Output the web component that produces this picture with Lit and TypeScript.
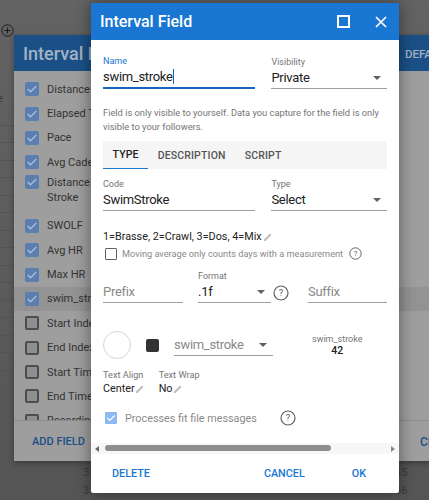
import { LitElement, html, css, svg } from "lit";
import { customElement } from "lit/decorators.js";

const caret = html`<svg class="caret" width="8" height="4" viewBox="0 0 8 4"><path d="M0 0h8L4 4z" fill="currentColor"/></svg>`;
const pencil = html`<svg class="pencil" width="8" height="8" viewBox="0 0 9 9"><path d="M0 9V7.4L6.8.6l1.6 1.6L1.6 9z" fill="#bdbdbd"/></svg>`;
const help = (s: number) => html`<svg class="help" width=${s} height=${s} viewBox="0 0 24 24"><circle cx="12" cy="12" r="10.5" fill="none" stroke="#5f5f5f" stroke-width="1.8"/><text x="12" y="17" text-anchor="middle" font-size="14" font-family="Roboto" fill="#5f5f5f">?</text></svg>`;
const check = svg`<path d="M3.5 9l3.6 3.6 7.4-7.4" fill="none" stroke-width="1.8"/>`;

@customElement("app-root")
export class AppRoot extends LitElement {
  static styles = css`
    :host { display: block; width: 429px; height: 500px; overflow: hidden; position: relative; background: linear-gradient(#636363, #555); font-family: Roboto, "Liberation Sans", sans-serif; }
    .plus { position: absolute; left: 1px; top: 24px; }
    .bgrows { position: absolute; left: 0; right: 0; top: 108px; }
    .bgrow { height: 17.5px; border-bottom: 1px solid #545454; box-sizing: border-box; }
    .bgnum { position: absolute; font-size: 11px; color: #3a3a3a; }
    .back { position: absolute; left: 14px; top: 35px; width: 440px; height: 426px; background: #9e9e9e; box-shadow: 0 2px 6px rgba(0,0,0,.35); display: flex; flex-direction: column; }
    .back-head { height: 36px; background: #1b5087; color: #a3b3c4; font-size: 18px; font-weight: 500; display: flex; align-items: center; padding-left: 9px; flex: none; }
    .back-list { flex: 1; padding: 0 0 0 11px; overflow: hidden; font-size: 11px; color: #333; }
    .b-item { display: flex; align-items: center; gap: 8px; height: 24.4px; }
    .b-item.two { align-items: flex-start; height: 39px; line-height: 15px; }
    .b-item.sel { background: #939393; margin-left: -11px; padding-left: 11px; }
    .b-box { width: 14px; height: 14px; border-radius: 2px; flex: none; background: #5a7eae; box-sizing: border-box; }
    .b-box svg { display: block; stroke: #a9bdd8; }
    .b-box.off { background: #8f8f8f; border: 2px solid #4e4e4e; }
    .back-foot { height: 40px; flex: none; border-top: 1px solid #8c8c8c; display: flex; align-items: center; padding-left: 18px; color: #1b5087; font-size: 11px; font-weight: 500; }
    .defa { position: absolute; left: 405px; top: 47px; color: #a3b3c4; font-size: 11.5px; font-weight: 500; }
    .cl { position: absolute; left: 420px; top: 435px; color: #1b5087; font-size: 12px; font-weight: 500; }

    .dlg { position: absolute; left: 91px; top: 3px; width: 308px; height: 490px; background: #fff; box-shadow: 0 0 16px rgba(0,0,0,.45); display: flex; flex-direction: column; border-radius: 2px; }
    .head { height: 37px; background: #1976d2; color: #fff; font-size: 16px; font-weight: 500; display: flex; align-items: center; padding: 0 12px 0 9px; flex: none; }
    .head .t { flex: 1; }
    .head .icons { display: flex; gap: 25px; align-items: center; }
    .body { flex: 1; padding: 0 12px; color: #212121; min-height: 0; }
    .row { display: flex; align-items: flex-end; }
    .field { position: relative; border-bottom: 1px solid #9e9e9e; display: flex; flex-direction: column; box-sizing: border-box; }
    .field.focus { border-bottom: 2px solid #1565c0; }
    .lbl { font-size: 9px; line-height: 12px; color: #757575; }
    .lbl.blue { color: #1976d2; }
    .val { font-size: 13px; letter-spacing: -.3px; line-height: 20px; color: #212121; display: flex; align-items: center; justify-content: space-between; }
    .val.ph { color: #8a8a8a; }
    .cur { display: inline-block; width: 1px; height: 15px; background: #1565c0; vertical-align: -3px; }
    .caret { color: #616161; margin-right: 6px; flex: none; }
    .name-row { margin-top: 15px; gap: 16px; }
    .hint { font-size: 9.3px; line-height: 14px; color: #757575; margin-top: 17px; }
    .tabs { display: flex; background: #f5f5f5; height: 28px; margin-top: 7px; font-size: 10.5px; font-weight: 500; color: #555; letter-spacing: .15px; }
    .tab { display: flex; align-items: center; padding: 0 9.5px; box-sizing: border-box; }
    .tab.on { color: #212121; border-bottom: 1px solid #1976d2; }
    .code-row { margin-top: 9px; gap: 16px; }
    .desc { font-size: 10.8px; line-height: 14px; color: #212121; margin-top: 19px; display: flex; align-items: center; gap: 2px; }
    .ma { font-size: 9.2px; color: #8a8a8a; display: flex; align-items: center; margin-top: 3px; margin-left: 2px; }
    .ma .box { width: 10px; height: 10px; border: 1px solid #616161; border-radius: 1px; margin-right: 5px; flex: none; }
    .ma .help { margin-left: 6px; }
    .fmt-row { margin-top: 10px; }
    .sw-row { display: flex; align-items: center; margin-top: 28px; }
    .circle { width: 28px; height: 28px; border-radius: 50%; border: 1px solid #d5d5d5; box-sizing: border-box; flex: none; }
    .sq { width: 13px; height: 13px; background: #333; border-radius: 2px; margin-left: 15px; flex: none; }
    .sw-field { width: 99px; margin-left: 15px; border-bottom: 1px solid #9e9e9e; }
    .stat { margin-left: 39px; text-align: center; font-size: 9px; line-height: 12.5px; color: #757575; }
    .stat b { display: block; font-weight: 500; font-size: 10.5px; color: #212121; }
    .wrap-row { display: flex; gap: 15px; margin-top: 10px; font-size: 9.2px; line-height: 12px; color: #757575; }
    .wrap-row .v { font-size: 10.8px; color: #212121; line-height: 14px; display: flex; align-items: center; gap: 1px; margin-top: 1px; }
    .fit { display: flex; align-items: center; margin-top: 14px; margin-left: 2px; font-size: 10.8px; color: #8a8a8a; }
    .fit .b { width: 12px; height: 12px; background: #8db9f2; border-radius: 1px; margin-right: 8px; flex: none; }
    .fit .b svg { display: block; stroke: #fff; }
    .fit .help { margin-left: 23px; }
    .scroll { height: 11px; background: #f7f7f7; flex: none; position: relative; }
    .arrow { width: 0; height: 0; border-style: solid; position: absolute; top: 2.5px; }
    .thumb { position: absolute; left: 14px; top: 2px; height: 6px; width: 226px; background: #8e8e8e; border-radius: 3px; }
    .foot { height: 39px; flex: none; display: flex; align-items: center; font-size: 10.8px; font-weight: 500; color: #1976d2; padding: 0 33px 0 21px; }
    .foot .sp { flex: 1; }
  `;

  bItem(t: string, on = true, cls = "") {
    return html`<div class="b-item ${cls}"><span class="b-box ${on ? "" : "off"}">${on ? html`<svg width="14" height="14" viewBox="0 0 18 18">${check}</svg>` : ""}</span><span>${t}</span></div>`;
  }

  render() {
    return html`
      <div class="bgrows">${Array.from({ length: 23 }).map(() => html`<div class="bgrow"></div>`)}</div>
      <svg class="plus" width="13" height="13" viewBox="0 0 13 13"><circle cx="6.5" cy="6.5" r="5.7" fill="none" stroke="#1c1c1c" stroke-width="1"/><path d="M3.5 6.5h6M6.5 3.5v6" stroke="#1c1c1c" stroke-width="1"/></svg>
      <div class="bgnum" style="left:-3px;top:92px">e</div>
      <div class="bgnum" style="left:83px;top:466px">3:</div>
      <div class="bgnum" style="left:83px;top:484px">3:</div>
      <div class="bgnum" style="left:395px;top:466px">35</div>
      <div class="bgnum" style="left:395px;top:484px">36</div>

      <div class="back">
        <div class="back-head">Interval Field</div>
        <div class="back-list">
          <div style="height:6px"></div>
          ${this.bItem("Distance")}${this.bItem("Elapsed Time")}${this.bItem("Pace")}${this.bItem("Avg Cadence")}
          <div class="b-item two"><span class="b-box"><svg width="14" height="14" viewBox="0 0 18 18">${check}</svg></span><span>Distance Per<br />Stroke</span></div>
          ${this.bItem("SWOLF")}${this.bItem("Avg HR")}${this.bItem("Max HR")}${this.bItem("swim_stroke", true, "sel")}
          ${this.bItem("Start Index", false)}${this.bItem("End Index", false)}${this.bItem("Start Time", false)}${this.bItem("End Time", false)}${this.bItem("Recording", false)}
        </div>
        <div class="back-foot">ADD FIELD</div>
      </div>
      <div class="defa">DEFA</div>
      <div class="cl">CL</div>

      <div class="dlg">
        <div class="head">
          <span class="t">Interval Field</span>
          <span class="icons">
            <svg width="13" height="13" viewBox="0 0 13 13"><rect x="1" y="1" width="11" height="11" fill="none" stroke="#fff" stroke-width="2"/></svg>
            <svg width="12" height="12" viewBox="0 0 12 12"><path d="M1 1l10 10M11 1L1 11" stroke="#fff" stroke-width="1.7"/></svg>
          </span>
        </div>
        <div class="body">
          <div class="row name-row">
            <div class="field focus" style="width:153px"><span class="lbl blue">Name</span><span class="val"><span>swim_stroke<span class="cur"></span></span></span></div>
            <div class="field" style="width:116px"><span class="lbl">Visibility</span><span class="val">Private ${caret}</span></div>
          </div>
          <div class="hint">Field is only visible to yourself. Data you capture for the field is only visible to your followers.</div>
          <div class="tabs"><span class="tab on">TYPE</span><span class="tab">DESCRIPTION</span><span class="tab">SCRIPT</span></div>
          <div class="row code-row">
            <div class="field" style="width:153px"><span class="lbl">Code</span><span class="val">SwimStroke</span></div>
            <div class="field" style="width:116px"><span class="lbl">Type</span><span class="val">Select ${caret}</span></div>
          </div>
          <div class="desc">1=Brasse, 2=Crawl, 3=Dos, 4=Mix${pencil}</div>
          <div class="ma"><span class="box"></span>Moving average only counts days with a measurement${help(13)}</div>
          <div class="row fmt-row">
            <div class="field" style="width:80px"><span class="val ph">Prefix</span></div>
            <div class="field" style="width:73px;margin-left:15px"><span class="lbl">Format</span><span class="val">.1f ${caret}</span></div>
            <span style="width:20px;display:flex;justify-content:center;margin-bottom:2px">${help(16)}</span>
            <div class="field" style="width:79px;margin-left:17px"><span class="val ph">Suffix</span></div>
          </div>
          <div class="sw-row">
            <span class="circle"></span><span class="sq"></span>
            <div class="sw-field"><span class="val ph">swim_stroke ${caret}</span></div>
            <div class="stat">swim_stroke<b>42</b></div>
          </div>
          <div class="wrap-row">
            <div>Text Align<div class="v">Center${pencil}</div></div>
            <div>Text Wrap<div class="v">No${pencil}</div></div>
          </div>
          <div class="fit"><span class="b"><svg width="12" height="12" viewBox="0 0 18 18">${check}</svg></span>Processes fit file messages${help(16)}</div>
        </div>
        <div class="scroll">
          <span class="arrow" style="left:4px;border-width:3px 4px 3px 0;border-color:transparent #666 transparent transparent"></span>
          <span class="thumb"></span>
          <span class="arrow" style="right:4px;border-width:3px 0 3px 4px;border-color:transparent transparent transparent #888"></span>
        </div>
        <div class="foot"><span>DELETE</span><span class="sp"></span><span>CANCEL</span><span style="width:47px"></span><span>OK</span></div>
      </div>
    `;
  }
}
